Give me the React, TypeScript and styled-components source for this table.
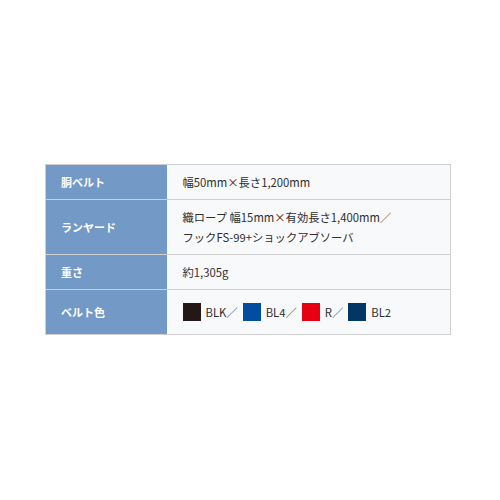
import React from 'react';
import styled, { createGlobalStyle } from 'styled-components';

const Global = createGlobalStyle`
	html, body {
		margin: 0;
		padding: 0;
		background: #fff;
	}
	body {
		font-family: "Noto Sans CJK JP", "Noto Sans", sans-serif;
		color: #333;
	}
`

const Page = styled.div`
	width: 500px;
	height: 500px;
	padding: 164px 49px 0 45px;
	box-sizing: border-box;
`

const SpecTable = styled.table`
	width: 406px;
	border-collapse: collapse;
	border: 1px solid #cfcfcf;
	font-size: 11.3px;
	line-height: 20px;
`

const Row = styled.tr`
	border-bottom: 1px solid #cfcfcf;
`

const Head = styled.th`
	width: 121px;
	box-sizing: border-box;
	background: #7399c7;
	color: #fff;
	font-size: 11px;
	font-weight: bold;
	text-align: left;
	padding: 7px 15px;
	vertical-align: middle;
`

const Cell = styled.td<{ tall?: boolean }>`
	background: #f8f9fb;
	padding: ${p => (p.tall ? '12px 16px' : '7px 16px')};
	vertical-align: middle;
	color: #2e2e2e;
`

const Colors = styled.div`
	display: flex;
	align-items: center;
`

const Swatch = styled.span<{ color: string }>`
	display: inline-block;
	width: 18px;
	height: 18px;
	background: ${p => p.color};
	margin-right: 5px;
`

const ColorName = styled.span`
	margin-right: 5px;
`

const colors = [
	{ name: 'BLK', color: '#231815' },
	{ name: 'BL4', color: '#004ea2' },
	{ name: 'R', color: '#e60012' },
	{ name: 'BL2', color: '#003764' },
]

export default function App() {
	return (
		<Page>
			<Global />
			<SpecTable>
				<tbody>
					<Row>
						<Head>胴ベルト</Head>
						<Cell>幅50mm×長さ1,200mm</Cell>
					</Row>
					<Row>
						<Head>ランヤード</Head>
						<Cell>
							織ロープ 幅15mm×有効長さ1,400mm／<br />
							フックFS-99+ショックアブソーバ
						</Cell>
					</Row>
					<Row>
						<Head>重さ</Head>
						<Cell>約1,305g</Cell>
					</Row>
					<Row>
						<Head>ベルト色</Head>
						<Cell tall>
							<Colors>
								{colors.map((c, i) => (
									<React.Fragment key={c.name}>
										<Swatch color={c.color} />
										<ColorName>{c.name}{i < colors.length - 1 ? '／' : ''}</ColorName>
									</React.Fragment>
								))}
							</Colors>
						</Cell>
					</Row>
				</tbody>
			</SpecTable>
		</Page>
	)
}
